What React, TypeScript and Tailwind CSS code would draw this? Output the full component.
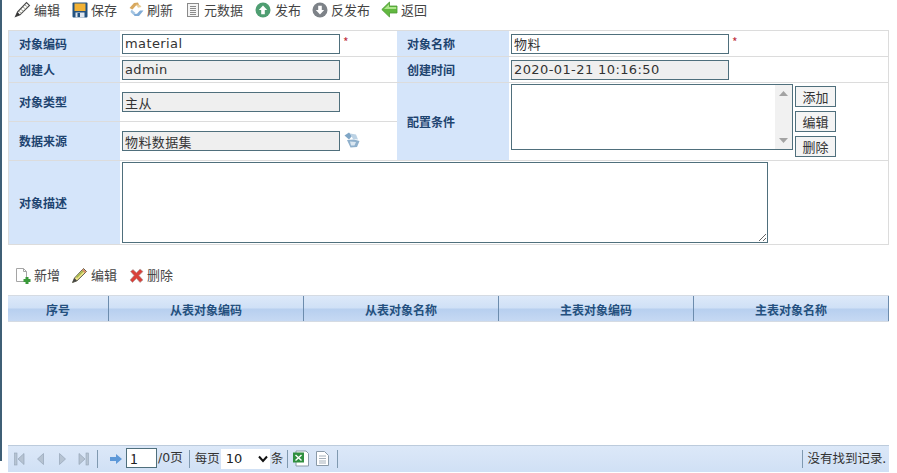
import React from "react";

const cjk = "font-['Noto_Sans_CJK_SC',sans-serif]";
const latin = "font-['DejaVu_Sans','Noto_Sans_CJK_SC',sans-serif]";

const Pencil = () => (
  <svg width="17" height="17" viewBox="0 0 17 17">
    <path d="M3.5 11 12.5 1.5 15.5 4.5 6 13.8 1.5 15.5z" fill="#fff" stroke="#4a4a4a" strokeWidth="1.1" />
    <path d="M5 10.5l2.5 1.5M7 8.5l2.5 1.5M9 6.3l2.5 1.5M11 4.2l2.2 1.4" stroke="#9a9a8a" strokeWidth="0.9" />
    <path d="M1.5 15.5 3.5 11 6 13.8z" fill="#333" />
  </svg>
);
const PencilColor = () => (
  <svg width="17" height="17" viewBox="0 0 17 17">
    <path d="M3.5 11 12.5 1.5 15.5 4.5 6 13.8 1.5 15.5z" fill="#efe48a" stroke="#5c5c4c" strokeWidth="1" />
    <path d="M11.5 2.5l3 3" stroke="#d98a6a" strokeWidth="1.8" />
    <path d="M5.5 10.5l6.500-6.500" stroke="#a3b64a" strokeWidth="1.6" />
    <path d="M1.5 15.5 3.5 11 6 13.8z" fill="#444" />
  </svg>
);
const Save = () => (
  <svg width="16" height="16" viewBox="0 0 16 16">
    <rect x="0.5" y="0.5" width="15" height="15" rx="1" fill="#24527f" />
    <rect x="2.5" y="1.5" width="11" height="7.5" fill="#f2b235" />
    <rect x="3.5" y="10.5" width="9" height="5" fill="#dfe6ee" />
    <rect x="5.5" y="11" width="2.5" height="4" fill="#24527f" />
  </svg>
);
const Refresh = () => (
  <svg width="17" height="17" viewBox="0 0 17 17">
    <path d="M1.5 7 6 2l4-.5 1 2.500-3 .5-3.500 4z" fill="#d8a85e" />
    <path d="M8 3.500l4 .5 1.500 2-3.500.8z" fill="#e8cd98" />
    <path d="M15.500 9.500 11 15H6.500l-1-2 3.500-.3 3-3.200z" fill="#7fabd6" />
    <path d="M3.500 8.500 7.500 12 5.500 14 2.500 11z" fill="#a3c4e2" />
  </svg>
);
const Meta = () => (
  <svg width="14" height="16" viewBox="0 0 14 16">
    <rect x="1.5" y="1.5" width="11" height="13" fill="#f4f4f4" stroke="#8a8a8a" />
    <path d="M4 4.500h6M4 6.500h6M4 8.500h6M4 10.500h6M4 12.500h6" stroke="#8a8a8a" strokeWidth="1" />
  </svg>
);
const Circle = ({ fill, up }: { fill: string; up: boolean }) => (
  <svg width="16" height="16" viewBox="0 0 16 16">
    <circle cx="8" cy="8" r="7.5" fill={fill} />
    <path
      d={up ? "M8 3.500 12.200 8H9.800v4.200H6.200V8H3.800z" : "M8 12.500 12.200 8H9.800V3.800H6.200V8H3.800z"}
      fill="#fff"
    />
  </svg>
);
const Back = () => (
  <svg width="17" height="17" viewBox="0 0 17 17">
    <path d="M0.8 8.500 8.500 1V5h7.500v7H8.500v4z" fill="#62b840" stroke="#4d9a35" strokeWidth="0.8" />
    <path d="M3 8 8 3.200v2.700h7.200V8z" fill="#aee68c" />
  </svg>
);
const DataSource = () => (
  <svg width="16" height="16" viewBox="0 0 16 16">
    <path d="M0.5 3.500 5 0.5l3 3.500-3 3.500z" fill="#7fa6c6" />
    <path d="M6 1.500l6 1 2 5-5-.5z" fill="#bcd2e4" />
    <path d="M3 8l7-.5 5.500 1.500-2.500 6-6.500 .5z" fill="#8fb0cc" />
    <path d="M6 9.500l6 .5-1.500 3.500-3.500 0z" fill="#dbe7f1" />
  </svg>
);
const NewDoc = () => (
  <svg width="16" height="17" viewBox="0 0 16 17">
    <path d="M1.500 1.500h7l3 3v10h-10z" fill="#fff" stroke="#a5a5a5" />
    <path d="M8.500 1.500v3h3" fill="none" stroke="#a5a5a5" />
    <rect x="10.5" y="10" width="3" height="7" fill="#3a9a3a" />
    <rect x="8.5" y="12" width="7" height="3" fill="#3a9a3a" />
  </svg>
);
const Del = () => (
  <svg width="15" height="15" viewBox="0 0 15 15">
    <path d="M1.500 3.500 4 1.500l3.500 3.200L11 1l3 2.500L10 7.500l4 4.500-3 2.500L7.500 10.500 3.500 14.500 1 12 5 7.500z" fill="#d9413a" stroke="#a8a8a8" strokeWidth="0.6" />
  </svg>
);
const NavIcon = ({ d, bar }: { d: string; bar?: "l" | "r" }) => (
  <svg width="11" height="14" viewBox="0 0 11 14">
    {bar === "l" && <rect x="0.5" y="1" width="2.5" height="12" fill="#b6c3d2" stroke="#95a5b7" strokeWidth="0.6" />}
    {bar === "r" && <rect x="8" y="1" width="2.5" height="12" fill="#b6c3d2" stroke="#95a5b7" strokeWidth="0.6" />}
    <path d={d} fill="#b6c3d2" stroke="#95a5b7" strokeWidth="0.7" />
  </svg>
);
const Sep = () => <div className="w-px h-[18px] bg-[#7f99b0] shrink-0" />;

const toolbar: [React.ReactNode, string, string, string][] = [
  [<Pencil />, "编辑", "w-[58px]", "gap-[3px]"],
  [<Save />, "保存", "w-[56px]", "gap-[3px]"],
  [<Refresh />, "刷新", "w-[58px]", "gap-[2px]"],
  [<Meta />, "元数据", "w-[69px]", "gap-[4px]"],
  [<Circle fill="#4f9e72" up />, "发布", "w-[57px]", "gap-[4px]"],
  [<Circle fill="#7d8288" up={false} />, "反发布", "w-[69px]", "gap-[3px]"],
  [<Back />, "返回", "w-[60px]", "gap-[3px]"],
];

const Label = ({ text, w = "w-[111px]" }: { text: string; w?: string }) => (
  <div className={`${w} shrink-0 bg-[#d5e5fa] flex items-center pl-[10px] text-[12px] font-bold text-[#1e4470]`}>
    {text}
  </div>
);

const Field = ({ value, gray }: { value: string; gray?: boolean }) => (
  <input
    readOnly
    value={value}
    className={`w-[218px] h-[20px] border border-[#4f6f7c] px-[2px] text-[13px] tracking-[0.4px] text-[#333] outline-none ${latin} ${gray ? "bg-[#efefef]" : "bg-white"}`}
  />
);

const Req = () => <span className="ml-[3px] text-[#c03040] text-[12px] leading-none -mt-[3px]">*</span>;

const SmallBtn = ({ t }: { t: string }) => (
  <div className="w-[41px] h-[21px] border border-[#4f6f7c] bg-[#f4f4f4] flex items-center justify-center text-[13px] text-[#333] leading-none">
    {t}
  </div>
);

const cols = ["序号", "从表对象编码", "从表对象名称", "主表对象编码", "主表对象名称"];

export default function App() {
  return (
    <div className={`relative w-[897px] h-[473px] overflow-hidden bg-white ${cjk} text-[#444]`}>
      <div className="absolute left-0 top-0 w-[2px] h-[461px] bg-[#3f5f76]" />

      <div className="flex items-center h-[19px] pl-[14px] text-[13px]">
        {toolbar.map(([icon, text, w, gap]) => (
          <div key={text} className={`flex items-center ${gap} ${w}`}>
            {icon}
            <span>{text}</span>
          </div>
        ))}
      </div>

      <div className="mt-[11px] ml-[8px] w-[881px] h-[215px] border border-[#dcdcdc] flex flex-col">
        <div className="flex h-[26px] border-b border-[#dcdcdc]">
          <Label text="对象编码" />
          <div className="w-[277px] flex items-center pl-[2px]">
            <Field value="material" />
            <Req />
          </div>
          <Label text="对象名称" w="w-[112px]" />
          <div className="flex-1 flex items-center pl-[2px]">
            <Field value="物料" />
            <Req />
          </div>
        </div>
        <div className="flex h-[26px] border-b border-[#dcdcdc]">
          <Label text="创建人" />
          <div className="w-[277px] flex items-center pl-[2px]">
            <Field value="admin" gray />
          </div>
          <Label text="创建时间" w="w-[112px]" />
          <div className="flex-1 flex items-center pl-[2px]">
            <Field value="2020-01-21 10:16:50" gray />
          </div>
        </div>
        <div className="flex h-[78px] border-b border-[#dcdcdc]">
          <div className="w-[388px] flex flex-col">
            <div className="flex h-[39px] border-b border-[#dcdcdc]">
              <Label text="对象类型" />
              <div className="flex-1 flex items-center pl-[2px]">
                <Field value="主从" gray />
              </div>
            </div>
            <div className="flex flex-1">
              <Label text="数据来源" />
              <div className="flex-1 flex items-center pl-[2px]">
                <Field value="物料数据集" gray />
                <span className="ml-[4px] -mt-[2px]"><DataSource /></span>
              </div>
            </div>
          </div>
          <Label text="配置条件" w="w-[112px]" />
          <div className="flex-1 flex pl-[2px] pt-[1px]">
            <div className="relative w-[282px] h-[66px]">
              <textarea
                readOnly
                className="block w-full h-full border border-[#4f6f7c] bg-white outline-none resize-none"
              />
              <div className="absolute right-px top-px bottom-px w-[17px] bg-[#f1f1f1] flex flex-col items-center justify-between py-[6px]">
                <svg width="9" height="5" viewBox="0 0 9 5"><path d="M4.500 0 9 5H0z" fill="#a3a3a3" /></svg>
                <svg width="9" height="5" viewBox="0 0 9 5"><path d="M4.500 5 9 0H0z" fill="#a3a3a3" /></svg>
              </div>
            </div>
            <div className="ml-[2px] mt-[2px] flex flex-col gap-[4px]">
              <SmallBtn t="添加" />
              <SmallBtn t="编辑" />
              <SmallBtn t="删除" />
            </div>
          </div>
        </div>
        <div className="flex flex-1">
          <Label text="对象描述" />
          <div className="flex-1 flex items-center pl-[2px]">
            <textarea
              readOnly
              className="w-[646px] h-[81px] border border-[#4f6f7c] bg-white outline-none"
            />
          </div>
        </div>
      </div>

      <div className="mt-[19px] h-[22px] pl-[15px] flex items-center text-[13px]">
        <div className="flex items-center gap-[3px] w-[56px]">
          <NewDoc />
          <span>新增</span>
        </div>
        <div className="flex items-center gap-[3px] w-[58px]">
          <PencilColor />
          <span>编辑</span>
        </div>
        <div className="flex items-center gap-[3px]">
          <Del />
          <span>删除</span>
        </div>
      </div>

      <div className="mt-[9px] ml-[8px] w-[881px] h-[27px] border-t border-b border-[#d5dbe3] flex bg-[linear-gradient(#dde9f9_0%,#cfe0f6_48%,#b7cfef_52%,#c6d9f3_100%)]">
        {cols.map((c, i) => (
          <div
            key={c}
            className={`${i === 0 ? "w-[101px]" : "w-[195px]"} border-r border-[#6c8cad] flex items-center justify-center pt-[3px] text-[12px] font-bold text-[#24507e]`}
          >
            {c}
          </div>
        ))}
      </div>

      <div className="mt-[123px] ml-[8px] w-[881px] h-[27px] border-t border-[#bccbdc] flex items-center bg-[linear-gradient(#dce8f8,#d0e0f5)] text-[12.5px] text-[#333]">
        <div className="w-[89px] flex items-center justify-between pl-[6px] pr-[8px]">
          <NavIcon bar="l" d="M10 1.500v11L4 7z" />
          <NavIcon d="M8.500 1.500v11L2.500 7z" />
          <NavIcon d="M2.500 1.500v11L8.500 7z" />
          <NavIcon bar="r" d="M1 1.500v11L7 7z" />
        </div>
        <Sep />
        <svg className="ml-[12px]" width="12" height="12" viewBox="0 0 12 12">
          <path d="M0 4h6V1l6 5-6 5V8H0z" fill="#5d98d8" />
        </svg>
        <div className="ml-[4px] w-[31px] h-[20px] border border-[#4f6f7c] bg-white pl-[3px] text-[14px] leading-[18px] text-[#222] -mt-[2px]">1</div>
        <span className={`ml-[1px] ${latin} text-[12.5px] -mt-[2px]`}>/0页</span>
        <div className="ml-[6px]"><Sep /></div>
        <span className="ml-[5px] -mt-[2px]">每页</span>
        <div className={`ml-[1px] w-[49px] h-[20px] bg-white flex items-center justify-between pl-[5px] pr-[2px] ${latin} text-[13px] text-[#222]`}>
          <span>10</span>
          <svg width="10" height="8" viewBox="0 0 10 8">
            <path d="M1 1.500 5 6l4-4.500" fill="none" stroke="#111" strokeWidth="2" />
          </svg>
        </div>
        <span className="ml-[1px] -mt-[2px]">条</span>
        <div className="ml-[4px]"><Sep /></div>
        <svg className="ml-[4px] -mt-[2px]" width="18" height="17" viewBox="0 0 18 17">
          <path d="M4 1h10l2.500 2.500V16H4z" fill="#fff" stroke="#8a9aa8" />
          <rect x="1" y="2.5" width="11" height="10" fill="#2f8f3f" />
          <path d="M3.500 5l6 5.500M9.500 5l-6 5.500" stroke="#fff" strokeWidth="1.4" />
        </svg>
        <svg className="ml-[5px] -mt-[2px]" width="15" height="17" viewBox="0 0 15 17">
          <path d="M1.500 1.500h8l4 4v10h-12z" fill="#fff" stroke="#8a9aa8" />
          <path d="M4 6h7M4 8.500h7M4 11h7M4 13h7" stroke="#a5b0ba" />
        </svg>
        <div className="ml-[7px]"><Sep /></div>
        <div className="flex-1" />
        <Sep />
        <span className="ml-[5px] mr-[3px] -mt-[2px]">没有找到记录.</span>
      </div>
    </div>
  );
}
